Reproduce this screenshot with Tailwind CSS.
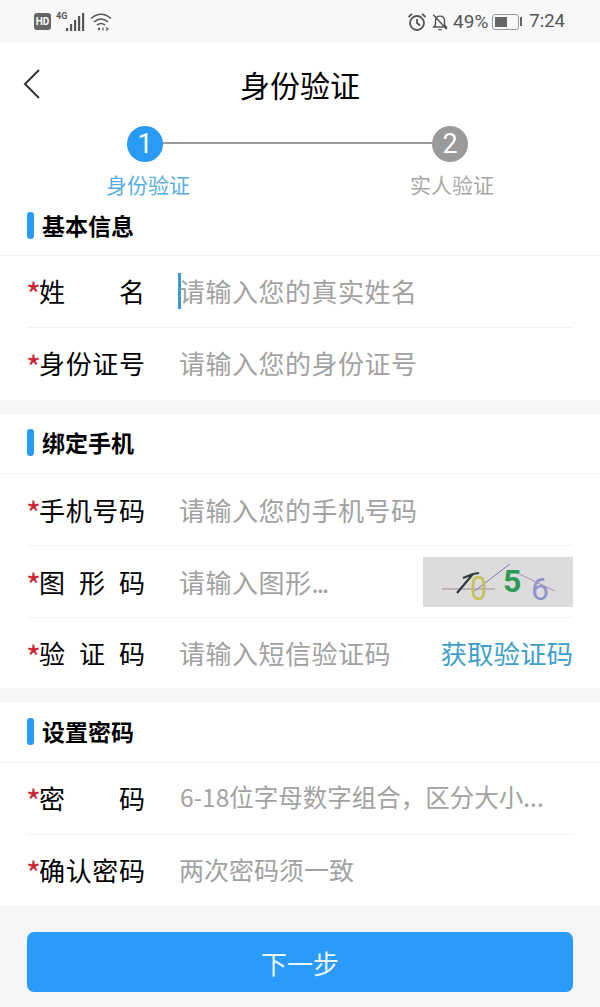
<!DOCTYPE html>
<html lang="zh-CN">
<head>
  <meta charset="UTF-8" />
  <title>身份验证</title>
  <script src="https://cdn.jsdelivr.net/npm/@tailwindcss/browser@4"></script>
</head>
<body class="bg-[#f4f5f6] text-black font-['Noto_Sans_CJK_SC','Noto_Sans',sans-serif] w-[600px] h-[1007px] overflow-hidden">

  <!-- status bar -->
  <header class="h-[43px] bg-[#f8f8f8] flex items-center justify-between pl-[34px] pr-[35px] text-[#555]">
    <div class="flex items-center gap-[4px]">
      <span class="w-[17px] h-[17px] rounded-[3px] bg-[#666] text-white text-[10px] font-bold flex items-center justify-center font-['Roboto']">HD</span>
      <svg width="30" height="22" viewBox="0 0 30 22" fill="#555">
        <text x="1" y="8" font-family="Roboto" font-size="9" font-weight="700">4G</text>
        <rect x="11" y="17" width="2.200" height="3"/><rect x="15" y="13" width="2.200" height="7"/><rect x="19" y="9" width="2.200" height="11"/><rect x="23" y="5" width="2.200" height="15"/><rect x="27" y="2" width="2.200" height="18"/>
      </svg>
      <svg class="ml-[1px]" width="22" height="20" viewBox="0 0 22 20" fill="none" stroke="#555" stroke-width="1.600">
        <path d="M1 6.500 Q11 -2 21 6.500"/><path d="M4 10 Q11 4 18 10"/><path d="M7 13 Q11 10 15 13"/>
        <circle cx="9" cy="17" r="1.200" fill="#555" stroke="none"/><path d="M13 15.500 L13 18.500 M16 15.500 L18 17 L16 18.500" stroke-width="1.200"/>
      </svg>
    </div>
    <div class="flex items-center">
      <svg width="20" height="20" viewBox="0 0 20 20" fill="none" stroke="#555" stroke-width="1.800">
        <circle cx="10" cy="11" r="7"/><path d="M10 7 V11 L13 13.500 M1.500 5 L5 1.800 M18.500 5 L15 1.800"/>
      </svg>
      <svg class="ml-[4px]" width="18" height="20" viewBox="0 0 20 20" fill="none" stroke="#555" stroke-width="1.600">
        <path d="M3 15.500 H17 L15 13 V8.500 Q15 3.500 10 3.500 Q5 3.500 5 8.500 V13 Z M8 18.500 H12 M2.500 2 L17.500 18"/>
      </svg>
      <span class="ml-[4px] text-[19px] font-['Roboto'] leading-none">49%</span>
      <div class="ml-[4px] w-[27px] h-[16px] border-[1.500px] border-[#999] rounded-[3px] p-[2px]">
        <div class="w-[12px] h-full bg-[#666]"></div>
      </div>
      <span class="ml-[1px] w-[2px] h-[9px] bg-[#666]"></span>
      <span class="ml-[7px] text-[18.500px] font-['Roboto'] leading-none">7:24</span>
    </div>
  </header>

  <!-- nav and steps -->
  <section class="bg-white h-[212px] relative">
    <div class="h-[83px] pb-[2px] flex items-center justify-center">
      <svg class="absolute left-[23px] top-[26px]" width="18" height="30" viewBox="0 0 18 30" fill="none" stroke="#333" stroke-width="2">
        <path d="M16 1 L2 15 L16 29"/>
      </svg>
      <h1 class="text-[30px] leading-none">身份验证</h1>
    </div>
    <div class="relative h-[85px]">
      <div class="absolute left-[146px] right-[150px] top-[16px] h-[2px] bg-[#999]"></div>
      <div class="flex justify-between pl-[106px] pr-[106px]">
        <div class="w-[84px] flex flex-col items-center relative">
          <span class="w-[36px] h-[36px] -translate-x-[3px] rounded-full bg-[#2a9bf4] text-white text-[27px] leading-none flex items-center justify-center font-['Roboto']">1</span>
          <span class="mt-[12px] text-[21px] leading-none text-[#5aaede] whitespace-nowrap">身份验证</span>
        </div>
        <div class="w-[84px] flex flex-col items-center relative">
          <span class="w-[36px] h-[36px] -translate-x-[2px] rounded-full bg-[#9a9a9a] text-white text-[27px] leading-none flex items-center justify-center font-['Roboto']">2</span>
          <span class="mt-[12px] text-[21px] leading-none text-[#a8a8a8] whitespace-nowrap">实人验证</span>
        </div>
      </div>
    </div>
    <div class="pl-[27px] flex items-center gap-[8px] h-[30px] -mt-[1px]">
      <span class="w-[7px] h-[27px] rounded-[3px] bg-[#2a9bf4]"></span>
      <span class="text-[23px] font-bold leading-none">基本信息</span>
    </div>
  </section>

  <!-- 基本信息 -->
  <section class="bg-white">
    <div class="h-[1px] bg-[#f2f2f2]"></div>
    <div class="mx-[27px] h-[72px] pb-[2px] border-b border-[#f2f2f2] flex items-center">
      <span class="text-[#c8232f] text-[32px] w-[12px] -ml-[1px] mr-[1px] leading-none pt-[5px]">*</span>
      <span class="w-[106px] flex justify-between text-[26px] leading-none"><span>姓</span><span>名</span></span>
      <span class="ml-[33px] w-[3px] h-[36px] bg-[#3c9bd0] -mr-[2px] shrink-0"></span>
      <span class="text-[26px] leading-none text-[#a2a2a2] tracking-[0.5px]">请输入您的真实姓名</span>
    </div>
    <div class="mx-[27px] h-[72px] pb-[2px] flex items-center">
      <span class="text-[#c8232f] text-[32px] w-[12px] -ml-[1px] mr-[1px] leading-none pt-[5px]">*</span>
      <span class="w-[106px] flex justify-between text-[26px] leading-none"><span>身</span><span>份</span><span>证</span><span>号</span></span>
      <span class="ml-[34px] text-[26px] leading-none text-[#a2a2a2] tracking-[0.5px]">请输入您的身份证号</span>
    </div>
  </section>

  <!-- 绑定手机 -->
  <section class="bg-white mt-[14px]">
    <div class="pl-[27px] pb-[2px] flex items-center gap-[8px] h-[60px] border-b border-[#f2f2f2]">
      <span class="w-[7px] h-[27px] rounded-[3px] bg-[#2a9bf4]"></span>
      <span class="text-[23px] font-bold leading-none">绑定手机</span>
    </div>
    <div class="mx-[27px] h-[72px] border-b border-[#f2f2f2] flex items-center">
      <span class="text-[#c8232f] text-[32px] w-[12px] -ml-[1px] mr-[1px] leading-none pt-[5px]">*</span>
      <span class="w-[106px] flex justify-between text-[26px] leading-none"><span>手</span><span>机</span><span>号</span><span>码</span></span>
      <span class="ml-[34px] text-[26px] leading-none text-[#a2a2a2] tracking-[0.5px]">请输入您的手机号码</span>
    </div>
    <div class="mx-[27px] h-[72px] border-b border-[#f2f2f2] flex items-center">
      <span class="text-[#c8232f] text-[32px] w-[12px] -ml-[1px] mr-[1px] leading-none pt-[5px]">*</span>
      <span class="w-[106px] flex justify-between text-[26px] leading-none"><span>图</span><span>形</span><span>码</span></span>
      <span class="ml-[34px] flex-1 text-[26px] leading-none text-[#a2a2a2] tracking-[0.5px]">请输入图形<span class="tracking-[-2px]">...</span></span>
      <svg class="bg-[#dcdcdc]" width="150" height="50" viewBox="0 0 150 50" fill="none">
        <path d="M19 32 H72" stroke="#a58aa0" stroke-width="1"/>
        <path d="M49 36 L87 7" stroke="#7d7ab8" stroke-width="1"/>
        <path d="M92 15 L132 34" stroke="#b58ab8" stroke-width="1"/>
        <path d="M34 36 L50 17 L40 21 M50 17 L56 16" stroke="#2f3a3a" stroke-width="2.200"/>
        <text x="47" y="43" font-family="Roboto" font-size="34" fill="#c9c05a" transform="translate(47 0) scale(0.9 1) translate(-47 0)">0</text>
        <text x="80" y="35" font-family="Roboto" font-size="32" font-weight="700" fill="#2f9a55">5</text>
        <text x="108" y="43" font-family="Roboto" font-size="32" fill="#8f92cc">6</text>
      </svg>
    </div>
    <div class="mx-[27px] h-[70px] flex items-center">
      <span class="text-[#c8232f] text-[32px] w-[12px] -ml-[1px] mr-[1px] leading-none pt-[5px]">*</span>
      <span class="w-[106px] flex justify-between text-[26px] leading-none"><span>验</span><span>证</span><span>码</span></span>
      <span class="ml-[34px] flex-1 text-[26px] leading-none text-[#a2a2a2] tracking-[0.5px]">请输入短信验证码</span>
      <span class="text-[26.500px] leading-none text-[#3f9fcb] whitespace-nowrap">获取验证码</span>
    </div>
  </section>

  <!-- 设置密码 -->
  <section class="bg-white mt-[14px]">
    <div class="pl-[27px] pb-[2px] flex items-center gap-[8px] h-[61px] border-b border-[#f2f2f2]">
      <span class="w-[7px] h-[27px] rounded-[3px] bg-[#2a9bf4]"></span>
      <span class="text-[23px] font-bold leading-none">设置密码</span>
    </div>
    <div class="mx-[27px] h-[72px] pb-[2px] border-b border-[#f2f2f2] flex items-center">
      <span class="text-[#c8232f] text-[32px] w-[12px] -ml-[1px] mr-[1px] leading-none pt-[5px]">*</span>
      <span class="w-[106px] flex justify-between text-[26px] leading-none"><span>密</span><span>码</span></span>
      <span class="ml-[35px] text-[24.500px] leading-none text-[#a2a2a2] whitespace-nowrap">6-18位字母数字组合，区分大小...</span>
    </div>
    <div class="mx-[27px] h-[71px] pb-[2px] flex items-center">
      <span class="text-[#c8232f] text-[32px] w-[12px] -ml-[1px] mr-[1px] leading-none pt-[5px]">*</span>
      <span class="w-[106px] flex justify-between text-[26px] leading-none"><span>确</span><span>认</span><span>密</span><span>码</span></span>
      <span class="ml-[34px] text-[25px] leading-none text-[#a2a2a2]">两次密码须一致</span>
    </div>
  </section>

  <div class="px-[27px] pt-[26px]">
    <button class="w-full h-[60px] rounded-[7px] bg-[#2a9bf9] text-white/90 text-[26px]">下一步</button>
  </div>

</body>
</html>
